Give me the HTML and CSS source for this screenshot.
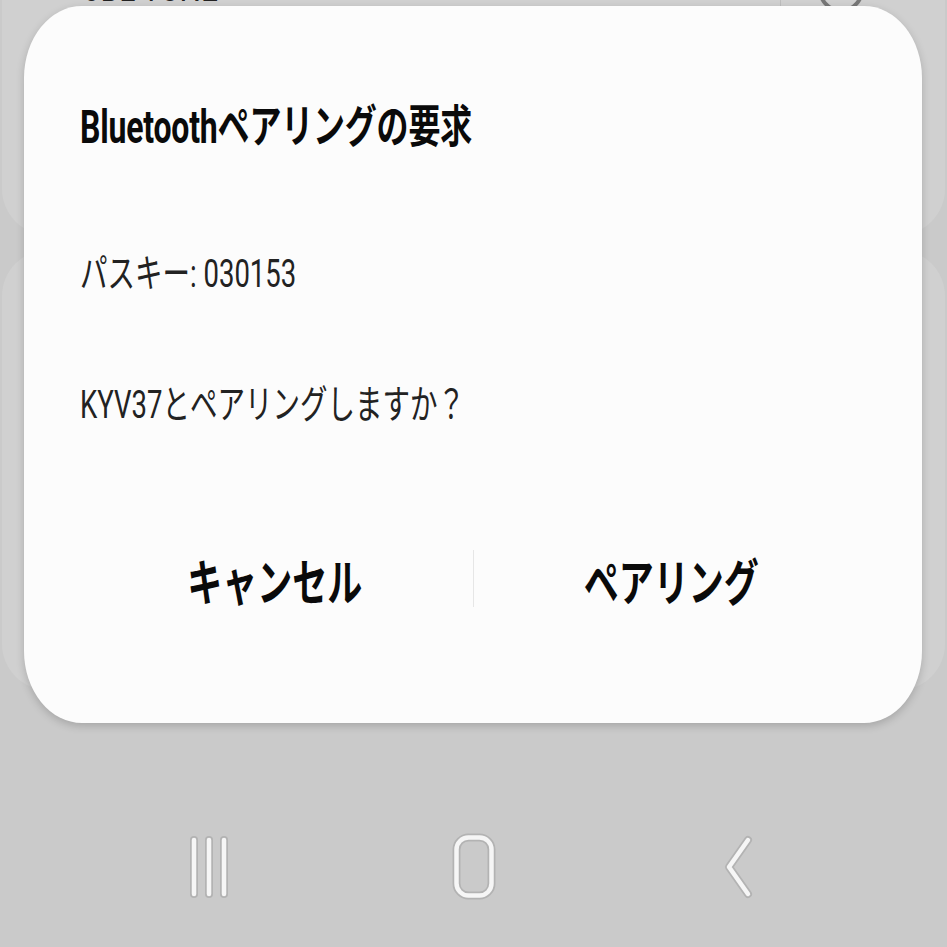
FILE: index.html
```html
<!DOCTYPE html>
<html lang="ja">
<head>
<meta charset="UTF-8" />
<title>Bluetoothペアリングの要求</title>
<link rel="stylesheet" href="styles.css">
</head>
<body>

<div class="screen">
  <div class="card card-top">
    <div class="device-row">
      <span class="device-name">JBL TUNE</span>
      <span class="device-sep"></span>
      <span class="device-gear"></span>
    </div>
  </div>
  <div class="card card-mid"></div>

  <nav class="navbar">
    <div class="nav-btn">
      <svg width="60" height="70" viewBox="0 0 60 70">
        <g class="nav-shadow">
          <line x1="15" y1="8" x2="15" y2="62" />
          <line x1="30" y1="8" x2="30" y2="62" />
          <line x1="45" y1="8" x2="45" y2="62" />
        </g>
        <g class="nav-fill">
          <line x1="15" y1="8" x2="15" y2="62" />
          <line x1="30" y1="8" x2="30" y2="62" />
          <line x1="45" y1="8" x2="45" y2="62" />
        </g>
      </svg>
    </div>
    <div class="nav-btn">
      <svg width="60" height="70" viewBox="0 0 60 70">
        <rect class="nav-shadow" x="12.5" y="5.5" width="35" height="58" rx="12" />
        <rect class="nav-fill" x="12.5" y="5.5" width="35" height="58" rx="12" />
      </svg>
    </div>
    <div class="nav-btn">
      <svg width="60" height="70" viewBox="0 0 60 70">
        <polyline class="nav-shadow" points="39,8 20,35 39,62" />
        <polyline class="nav-fill" points="39,8 20,35 39,62" />
      </svg>
    </div>
  </nav>
</div>

<div class="dialog">
  <h1 class="dialog-title"><span class="tall">Bluetoothペアリングの要求</span></h1>
  <p class="dialog-line passkey"><span class="tall">パスキー: 030153</span></p>
  <p class="dialog-line question"><span class="tall">KYV37とペアリングしますか？</span></p>

  <div class="dialog-actions">
    <button class="action"><span class="tall">キャンセル</span></button>
    <span class="action-sep"></span>
    <button class="action"><span class="tall">ペアリング</span></button>
  </div>
</div>

</body>
</html>
```

FILE: styles.css
```css
body { margin: 0; background: #cacaca; font-family: Roboto, "Noto Sans CJK JP", sans-serif; overflow: hidden; }

.screen { height: 947px; display: flex; flex-direction: column; padding: 0 2px; box-sizing: border-box; }
.card { background: #d0d0d0; border-radius: 46px; }
.card-top { margin-top: -70px; height: 305px; }
.card-mid { margin-top: 15px; height: 440px; }

.device-row { display: flex; align-items: center; margin-top: 34px; height: 44px; padding-left: 82px; }
.device-name { font-size: 30px; color: #222; transform: scaleY(1.42); display: inline-block; }
.device-sep { width: 1px; height: 60px; background: #bdbdbd; margin-left: auto; }
.device-gear { width: 40px; height: 46px; border: 4px solid #777; border-radius: 50%; margin: 0 80px 0 36px; }

.navbar { margin-top: auto; height: 115px; padding: 0 74px 0 75px; display: grid; grid-template-columns: 1fr 1fr 1fr; }
.nav-btn { display: flex; justify-content: center; }
.nav-btn svg { display: block; }
.nav-shadow { fill: none; stroke: #b3b3b3; stroke-width: 8; stroke-linecap: round; stroke-linejoin: round; }
.nav-fill { fill: none; stroke: #f6f6f6; stroke-width: 4.5; stroke-linecap: round; stroke-linejoin: round; }

.dialog { position: absolute; left: 24px; top: 6px; width: 898px; height: 717px; box-sizing: border-box;
  background: #fcfcfc; border-radius: 58px / 72px; box-shadow: 0 3px 8px rgba(0,0,0,0.18);
  padding: 99px 53px 0 56px; }

.tall { display: inline-block; transform: scaleY(1.42); transform-origin: center; white-space: nowrap; }

.dialog-title { margin: 0; font-size: 32px; line-height: 44px; font-weight: 700; color: #0a0a0a; letter-spacing: -0.2px; }
.dialog-line { margin: 0; font-size: 27.5px; line-height: 40px; color: #222; }
.passkey { margin-top: 105px; }
.question { margin-top: 91px; }

.dialog-actions { display: flex; align-items: center; margin: 123px 0 0 -3px; height: 60px; }
.action { flex: 1; border: none; background: none; padding: 0; font-family: inherit; font-size: 35px; font-weight: 700; color: #0a0a0a; height: 60px; }
.action-sep { width: 1px; height: 57px; background: #e6e6e6; }
```
